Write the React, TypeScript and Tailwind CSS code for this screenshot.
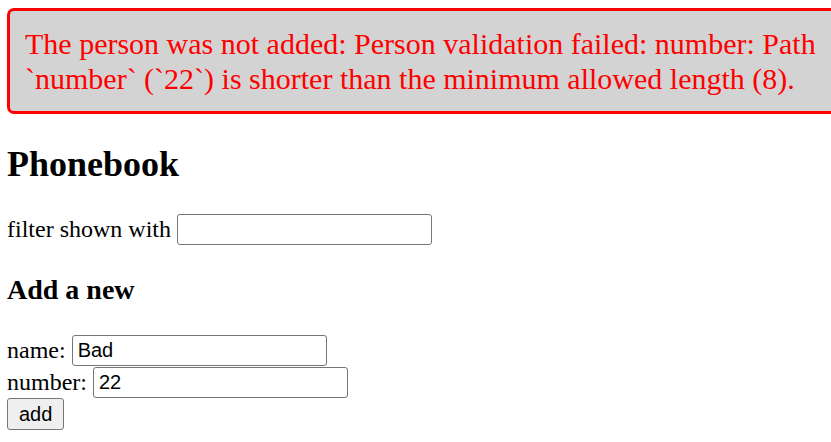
import React from 'react';

const inputClass =
  "h-[31px] w-[255px] rounded-[3px] border border-[#767676] px-[5px] font-['Liberation_Sans',sans-serif] text-[20px]";

export default function App() {
  return (
    <div className="min-h-screen overflow-hidden bg-white pl-[7px] pt-[8px] font-['Liberation_Serif',serif] text-[24px] text-black">
      {/* Error notification */}
      <div className="w-[880px] rounded-[7px] border-[3px] border-solid border-[#ff0000] bg-[#d3d3d3] p-[15px] text-[30px] leading-[35px] text-[#ff0000]">
        The person was not added: Person validation failed: number: Path `number` (`22`) is shorter than the minimum allowed length (8).
      </div>

      <h2 className="mt-[30px] mb-[27px] text-[36px] font-bold leading-[41px]">Phonebook</h2>

      <div className="flex h-[34px] items-center gap-[6px]">
        <span>filter shown with</span>
        <input className={inputClass} />
      </div>

      <h3 className="mt-[28px] mb-[28px] text-[28px] font-bold leading-[32px]">Add a new</h3>

      <form onSubmit={e => e.preventDefault()}>
        <div className="flex h-[32px] items-center gap-[6px]">
          <span>name:</span>
          <input defaultValue="Bad" className={inputClass} />
        </div>
        <div className="flex h-[32px] items-center gap-[6px]">
          <span>number:</span>
          <input defaultValue="22" className={inputClass} />
        </div>
        <div className="flex h-[32px] items-center">
          <button
            type="submit"
            className="h-[32px] rounded-[3px] border border-[#767676] bg-[#efefef] px-[11px] font-['Liberation_Sans',sans-serif] text-[20px]"
          >
            add
          </button>
        </div>
      </form>
    </div>
  );
}
